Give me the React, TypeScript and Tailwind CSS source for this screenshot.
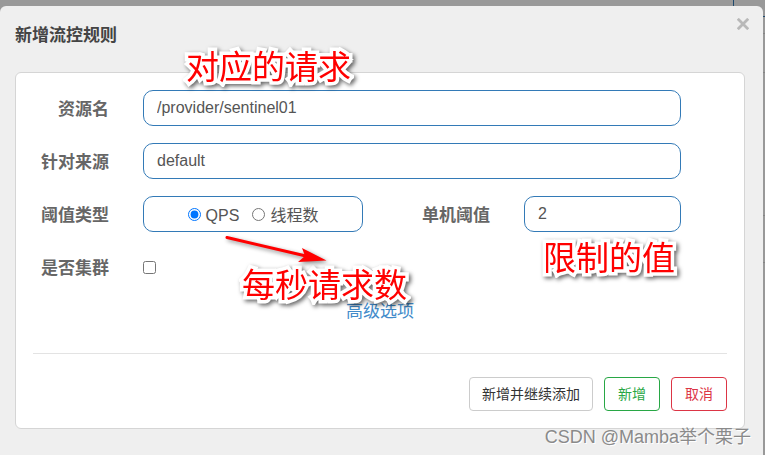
import React, { useState } from 'react';

const fieldClass =
  'h-9 rounded-[10px] border border-[#337ab7] bg-white px-[13px] text-base text-[#555] outline-none';
const labelClass = 'pt-1 text-[17px] leading-6 font-bold text-[#666]';
const buttonClass =
  'h-[34px] min-w-14 rounded border bg-white px-3 text-sm leading-5';
const noteClass =
  'pointer-events-none absolute whitespace-nowrap text-[33px] leading-8 font-normal text-[#f00] [-webkit-text-stroke:7px_white] [paint-order:stroke_fill] drop-shadow-[2px_2px_2px_rgba(0,0,0,0.6)]';

const Arrow = () => (
  <svg
    className="pointer-events-none absolute top-[232px] left-[222px] drop-shadow-[2px_2px_2px_rgba(0,0,0,0.45)]"
    width="110"
    height="36"
    viewBox="0 0 110 36"
    aria-hidden="true"
  >
    <path d="M5 5.5 L84 24" stroke="#f00" strokeWidth="3" strokeLinecap="round" />
    <path d="M80 16 L104.5 28.5 L76 30 L83 24 Z" fill="#f00" />
  </svg>
);

const FlowRuleDialog = () => {
  const [resource, setResource] = useState('/provider/sentinel01');
  const [limitApp, setLimitApp] = useState('default');
  const [grade, setGrade] = useState('qps');
  const [count, setCount] = useState('2');
  const [cluster, setCluster] = useState(false);

  return (
    <div
      role="dialog"
      aria-labelledby="dialog-title"
      className="mr-0.5 min-h-[calc(100vh-6px)] rounded-t-md bg-[#efefef] pr-[18px] pb-[26px] pl-[15px]"
    >
      <div className="flex h-[66px] items-start justify-between">
        <h1 id="dialog-title" className="pt-[18px] text-[17px] leading-6 font-bold text-[#444]">
          新增流控规则
        </h1>
        <button type="button" aria-label="关闭" className="-mr-1 pt-3 text-[#b8b8b8]">
          <svg width="12" height="12" viewBox="0 0 12 12" stroke="currentColor" strokeWidth="2.8">
            <path d="M0.8 0.8 L11.2 11.2 M11.2 0.8 L0.8 11.2" />
          </svg>
        </button>
      </div>

      <form
        onSubmit={(e) => e.preventDefault()}
        className="rounded-md border border-[#d5d5d5] bg-white px-[17px] pt-[17px] pb-[17px]"
      >
        <div className="space-y-[17px] pr-[46px]">
          <div className="flex items-center gap-[34px]">
            <label htmlFor="resource" className={`w-[76px] text-right ${labelClass}`}>资源名</label>
            <input
              id="resource"
              value={resource}
              onChange={(e) => setResource(e.target.value)}
              className={`min-w-0 flex-1 ${fieldClass}`}
            />
          </div>
          <div className="flex items-center gap-[34px]">
            <label htmlFor="limit-app" className={`w-[76px] text-right ${labelClass}`}>针对来源</label>
            <input
              id="limit-app"
              value={limitApp}
              onChange={(e) => setLimitApp(e.target.value)}
              className={`min-w-0 flex-1 ${fieldClass}`}
            />
          </div>
          <div className="flex items-center gap-[34px]">
            <span id="grade-label" className={`w-[76px] text-right ${labelClass}`}>阈值类型</span>
            <div
              role="radiogroup"
              aria-labelledby="grade-label"
              className={`flex w-[220px] items-center justify-center gap-[13px] pt-1 ${fieldClass}`}
            >
              <label className="flex items-center gap-[5px]">
                <input
                  type="radio"
                  name="grade"
                  className="mb-1 size-[13px]"
                  checked={grade === 'qps'}
                  onChange={() => setGrade('qps')}
                />
                QPS
              </label>
              <label className="flex items-center gap-[5px]">
                <input
                  type="radio"
                  name="grade"
                  className="mb-1 size-[13px]"
                  checked={grade === 'thread'}
                  onChange={() => setGrade('thread')}
                />
                线程数
              </label>
            </div>
            <label htmlFor="count" className={`flex-1 text-right ${labelClass}`}>单机阈值</label>
            <input
              id="count"
              value={count}
              onChange={(e) => setCount(e.target.value)}
              className={`w-[157px] ${fieldClass}`}
            />
          </div>
          <div className="flex h-9 items-center gap-[34px]">
            <label htmlFor="cluster" className={`w-[76px] text-right ${labelClass}`}>是否集群</label>
            <input
              id="cluster"
              type="checkbox"
              className="size-[13px]"
              checked={cluster}
              onChange={(e) => setCluster(e.target.checked)}
            />
          </div>
        </div>

        <div className="mt-[17px] flex justify-center text-[17px] leading-5">
          <a href="#advanced" className="text-[#428bca]">高级选项</a>
        </div>

        <hr className="mt-[31px] border-[#e3e3e3]" />

        <div className="mt-[23px] flex justify-end gap-[11px]">
          <button type="button" className={`border-[#ccc] text-[#333] ${buttonClass}`}>新增并继续添加</button>
          <button type="submit" className={`border-[#28a745] text-[#28a745] ${buttonClass}`}>新增</button>
          <button type="button" className={`border-[#dc3545] text-[#dc3545] ${buttonClass}`}>取消</button>
        </div>
      </form>
    </div>
  );
};

const App = () => {
  return (
    <div className="relative min-h-screen overflow-hidden bg-[#999] pt-1.5 font-['Liberation_Sans','Noto_Sans_CJK_SC',sans-serif]">
      {/* edges of the dimmed page behind the dialog */}
      <div className="absolute top-0 right-0 h-[17px] w-8 border-b border-l border-[#1f4a6e]" />
      <div className="absolute top-[33px] right-0 h-10 w-2 border-y border-[#858585]" />
      <div className="absolute top-[215px] right-0 h-12 w-2 border-y border-[#858585]" />
      <div className="relative">
        <FlowRuleDialog />
      </div>

      <p className={`top-[52px] left-[186px] ${noteClass}`}>对应的请求</p>
      <p className={`top-[270px] left-[242px] ${noteClass}`}>每秒请求数</p>
      <p className={`top-[243px] left-[543px] ${noteClass}`}>限制的值</p>
      <Arrow />

      <p className="absolute right-3.5 bottom-1.5 text-lg leading-6 text-[#8a8a8a] [text-shadow:1px_1px_0_#fff]">
        CSDN @Mamba举个栗子
      </p>
    </div>
  );
};

export default App;
